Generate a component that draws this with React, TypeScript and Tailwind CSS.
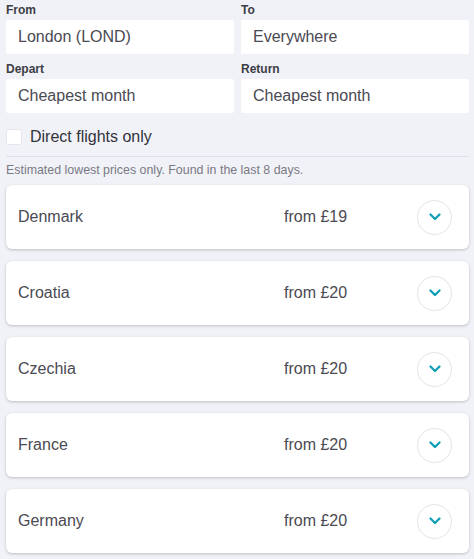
const results = [
  { country: "Denmark", price: "from £19" },
  { country: "Croatia", price: "from £20" },
  { country: "Czechia", price: "from £20" },
  { country: "France", price: "from £20" },
  { country: "Germany", price: "from £20" },
];

function Field({ label, value }: { label: string; value: string }) {
  return (
    <div className="flex flex-col">
      <div className="h-[20px] pt-[2px] text-[12px] leading-[16px] font-bold text-[#3d3d45]">
        {label}
      </div>
      <div className="h-[34px] bg-white rounded-[2px] pl-[12px] flex items-center text-[16px] text-[#4a4a52]">
        {value}
      </div>
    </div>
  );
}

function Chevron() {
  return (
    <svg width="12" height="8" viewBox="0 0 12 8" fill="none">
      <path
        d="M1.5 1.5 L6 6 L10.5 1.5"
        stroke="#0c9fb7"
        strokeWidth="2.2"
        strokeLinecap="round"
        strokeLinejoin="round"
      />
    </svg>
  );
}

export default function App() {
  return (
    <div
      className="w-[474px] h-[559px] overflow-hidden bg-[#f1f2f7] pl-[6px] pr-[5px]"
      style={{ fontFamily: '"Liberation Sans", Arial, sans-serif' }}
    >
      {/* search form */}
      <div className="grid grid-cols-2 gap-x-[7px] gap-y-[5px]">
        <Field label="From" value="London (LOND)" />
        <Field label="To" value="Everywhere" />
        <Field label="Depart" value="Cheapest month" />
        <Field label="Return" value="Cheapest month" />
      </div>

      <label className="mt-[15px] h-[17px] flex items-center gap-[8px]">
        <span className="w-[16px] h-[16px] bg-white border border-[#e6e7ee] rounded-[2px]" />
        <span className="text-[16px] text-[#33333b]">Direct flights only</span>
      </label>

      <div className="mt-[11px] h-px bg-[#dfe0e8]" />

      <p className="mt-[5px] text-[12.4px] leading-[16px] text-[#7a7a84]">
        Estimated lowest prices only. Found in the last 8 days.
      </p>

      {/* results */}
      <div className="mt-[7px] flex flex-col gap-[12px]">
        {results.map((r) => (
          <div
            key={r.country}
            className="h-[64px] bg-white rounded-[6px] shadow-[0_1px_3px_rgba(0,0,0,0.22)] flex items-center pl-[12px] pr-[17px] text-[16px] text-[#4a4a52]"
          >
            <span className="w-[266px]">{r.country}</span>
            <span className="flex-1">{r.price}</span>
            <span className="w-[35px] h-[35px] rounded-full border border-[#e3e4ea] flex items-center justify-center">
              <Chevron />
            </span>
          </div>
        ))}
      </div>
    </div>
  );
}
